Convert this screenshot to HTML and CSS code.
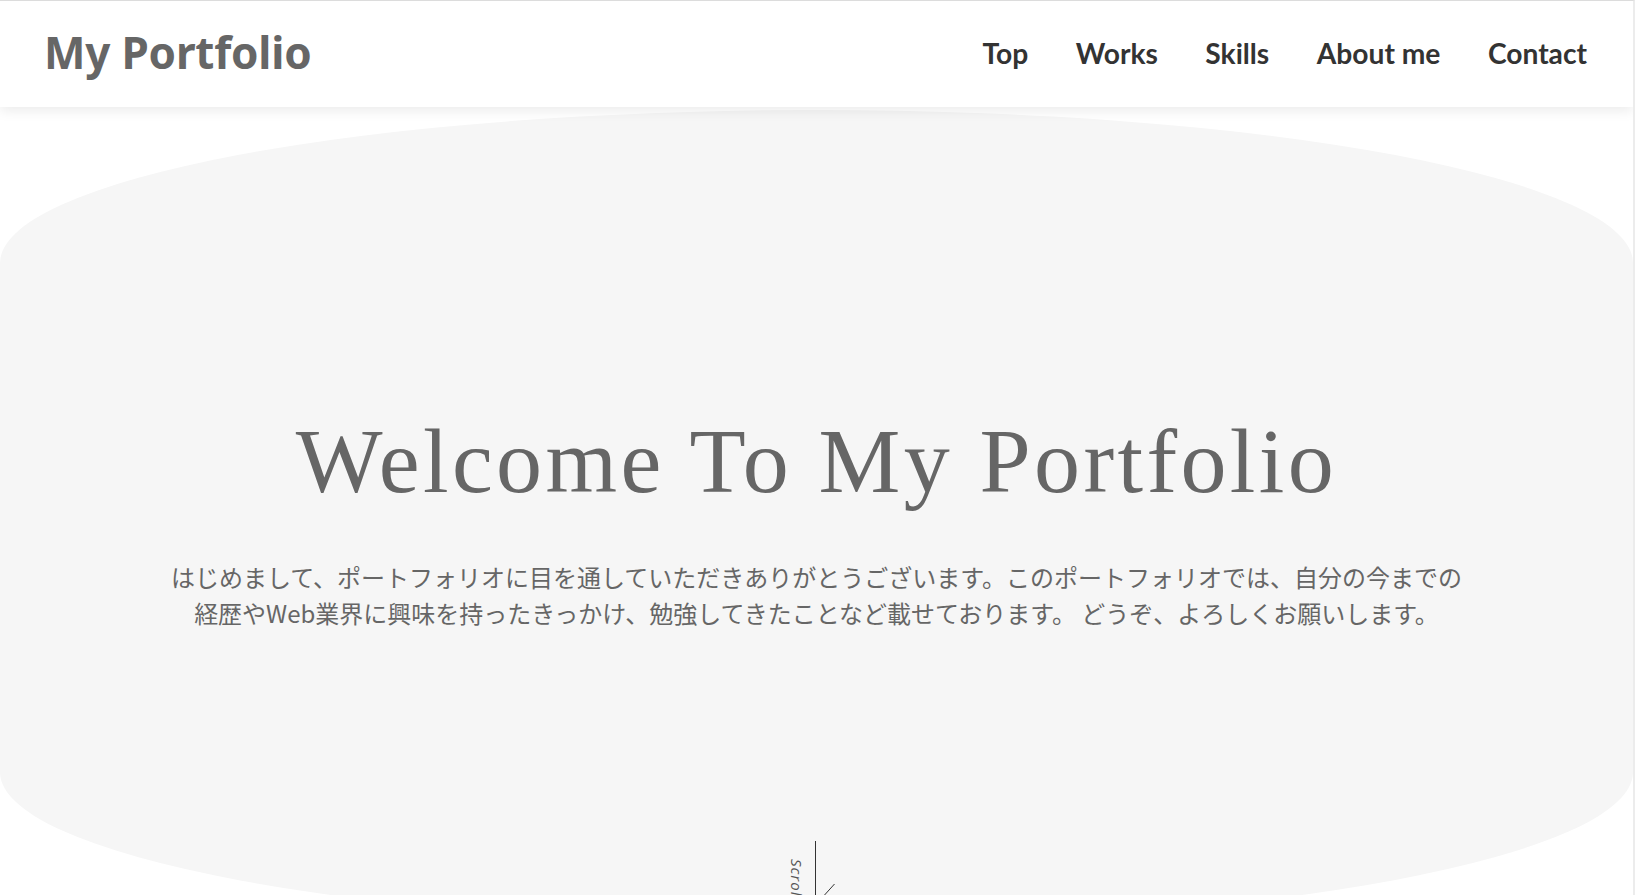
FILE: index.html
```html
<!DOCTYPE html>
<html lang="ja">
<head>
<meta charset="utf-8">
<title>My Portfolio</title>
<link rel="stylesheet" href="styles.css">
</head>
<body>
<div class="frame">
  <header class="site-header">
    <h1 class="logo">My Portfolio</h1>
    <nav class="nav">
      <a href="#top">Top</a>
      <a href="#works">Works</a>
      <a href="#skills">Skills</a>
      <a href="#about">About me</a>
      <a href="#contact">Contact</a>
    </nav>
  </header>
  <section class="hero" id="top">
    <div class="hero-inner">
      <h2 class="hero-title">Welcome To My Portfolio</h2>
      <p class="hero-text">はじめまして、ポートフォリオに目を通していただきありがとうございます。このポートフォリオでは、自分の今までの経歴やWeb業界に興味を持ったきっかけ、勉強してきたことなど載せております。 どうぞ、よろしくお願いします。</p>
    </div>
    <div class="scroll">
      <span class="scroll-label">Scroll</span>
      <svg class="scroll-svg" width="24" height="80" viewBox="0 0 24 80"><path d="M0.5 0 V64 L19.5 43" fill="none" stroke="#333" stroke-width="1"/></svg>
    </div>
  </section>
</div>
</body>
</html>
```
FILE: styles.css
```css
html, body {
  margin: 0;
  padding: 0;
  background: #ffffff;
}
body {
  overflow: hidden;
  height: 895px;
}
.frame {
  border-top: 1px solid #dcdcdc;
  border-right: 2px solid #ececec;
  height: 894px;
  overflow: hidden;
  box-sizing: content-box;
}
.site-header {
  position: relative;
  z-index: 2;
  height: 106px;
  background: #ffffff;
  box-shadow: 0 4px 12px rgba(0, 0, 0, 0.08);
  display: flex;
  align-items: center;
  justify-content: space-between;
  padding: 0 46px 0 44px;
}
.logo {
  margin: 0 0 5px 0;
  font-family: "Noto Sans", "DejaVu Sans", sans-serif;
  font-weight: 700;
  font-size: 44px;
  color: #666666;
  letter-spacing: -0.2px;
}
.nav {
  display: flex;
  gap: 47.5px;
  margin-bottom: 2px;
}
.nav a {
  font-family: Lato, "Noto Sans", sans-serif;
  font-weight: 700;
  font-size: 28.2px;
  color: #333333;
  text-decoration: none;
}
.hero {
  position: relative;
  margin-top: 3px;
  height: 815px;
  background: #f6f6f6;
  border-radius: 50% / 153px;
  display: flex;
  align-items: center;
  justify-content: center;
}
.hero-inner {
  display: flex;
  flex-direction: column;
  align-items: center;
  text-align: center;
}
.hero-title {
  margin: 2px 0 0 0;
  font-family: "Liberation Serif", "DejaVu Serif", serif;
  font-weight: 400;
  font-size: 92px;
  line-height: 110px;
  letter-spacing: 3.4px;
  color: #666666;
}
.hero-text {
  margin: 43px 0 0 0;
  max-width: 1300px;
  font-family: "Noto Sans CJK JP", "Noto Sans", sans-serif;
  font-size: 24px;
  line-height: 36px;
  color: #666666;
}
.scroll {
  position: absolute;
  left: 50%;
  top: 731px;
  margin-left: -1.5px;
  width: 24px;
  height: 80px;
}
.scroll-svg {
  display: block;
  position: absolute;
  left: 0;
  top: 0;
}
.scroll-label {
  position: absolute;
  left: -28px;
  top: 18px;
  writing-mode: vertical-rl;
  font-family: "Open Sans", "Noto Sans", sans-serif;
  font-style: italic;
  font-size: 15px;
  letter-spacing: 1px;
  color: #555555;
}
```
